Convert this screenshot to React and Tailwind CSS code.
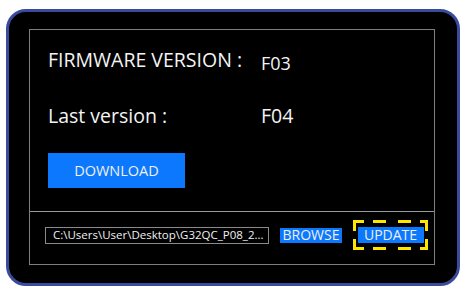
import React from "react";

function DashedFrame() {
  return (
    <svg className="absolute inset-0" width="75" height="30" viewBox="0 0 75 30" fill="none">
      <g stroke="#ffe600" strokeWidth="3" strokeLinecap="butt">
        <path d="M1.5 11V1.5H11" />
        <path d="M20 1.5H33" />
        <path d="M45 1.5H58" />
        <path d="M67 1.5H73.5V11" />
        <path d="M1.5 19V28.5H11" />
        <path d="M20 28.5H33" />
        <path d="M45 28.5H58" />
        <path d="M67 28.5H73.5V19" />
      </g>
    </svg>
  );
}

export default function App() {
  return (
    <div className="w-[467px] h-[294px] bg-white pt-[9px] pl-[6px] font-['Open_Sans',sans-serif]">
      <div className="w-[454px] h-[277px] border-[3px] border-[#3a4a9c] rounded-[20px] bg-black pt-[17px] pl-[20px]">
        <div className="w-[406px] h-[236px] border border-[#7f7f7f] flex flex-col">
          <div className="h-[182px] border-b border-[#9a9a9a] pl-[18px] pt-[16px] flex flex-col text-[19.5px] text-[#f4f4f4] leading-[28px]">
            <div className="grid grid-cols-[213px_100px] h-[28px]">
              <span className="whitespace-nowrap">FIRMWARE VERSION :</span>
              <span className="pt-[3px] text-[18px]">F03</span>
            </div>
            <div className="grid grid-cols-[213px_100px] h-[28px] mt-[28px]">
              <span className="whitespace-nowrap">Last version :</span>
              <span>F04</span>
            </div>
            <button className="mt-[23px] w-[137px] h-[35px] bg-[#0b78fe] text-[#f0f0f0] text-[14.5px] flex items-center justify-center">
              DOWNLOAD
            </button>
          </div>
          <div className="h-[46px] flex items-center pl-[15px]">
            <div className="w-[224px] shrink-0 h-[17px] border border-[#8a8a8a] flex items-center pl-[7px] text-[11.5px] text-[#f0f0f0] whitespace-nowrap overflow-hidden leading-none">
              C:\Users\User\Desktop\G32QC_P08_2...
            </div>
            <button className="ml-[11px] shrink-0 w-[62px] h-[15px] bg-[#0b78fe] text-[#f0f0f0] text-[14px] leading-none flex items-center justify-center">
              BROWSE
            </button>
            <div className="relative ml-[11px] shrink-0 w-[75px] h-[30px] flex items-center justify-center">
              <DashedFrame />
              <button className="w-[66px] h-[16px] bg-[#0b78fe] text-[#f0f0f0] text-[14px] leading-none flex items-center justify-center">
                UPDATE
              </button>
            </div>
          </div>
        </div>
      </div>
    </div>
  );
}
